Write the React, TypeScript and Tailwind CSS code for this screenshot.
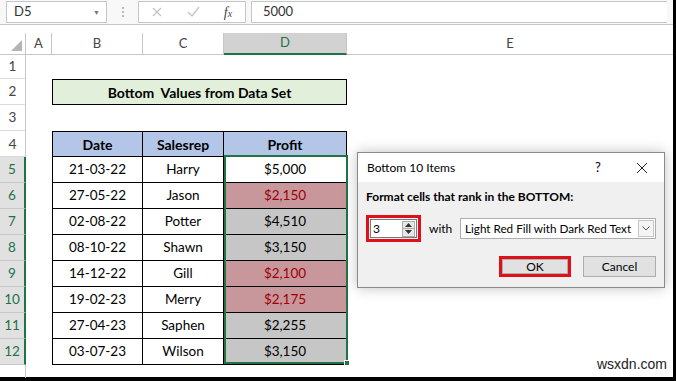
import React from "react";

const rows = [
  { d: "21-03-22", n: "Harry", p: "$5,000", t: "white" },
  { d: "27-05-22", n: "Jason", p: "$2,150", t: "red" },
  { d: "02-08-22", n: "Potter", p: "$4,510", t: "gray" },
  { d: "08-10-22", n: "Shawn", p: "$3,150", t: "gray" },
  { d: "14-12-22", n: "Gill", p: "$2,100", t: "red" },
  { d: "19-02-23", n: "Merry", p: "$2,175", t: "red" },
  { d: "27-04-23", n: "Saphen", p: "$2,255", t: "gray" },
  { d: "03-07-23", n: "Wilson", p: "$3,150", t: "gray" },
];

const cols = "grid grid-cols-[26px_26px_91px_81px_123px_1fr]";

function RowHead({ n, sel }: { n: number; sel?: boolean }) {
  return (
    <div
      className={
        sel
          ? "flex items-center justify-center bg-[#e1e1e1] text-[#217346] border-r-2 border-r-[#217346] border-b border-b-[#c8c8c8]"
          : "flex items-center justify-center bg-white text-[#444] border-r border-r-[#c6c6c6] border-b border-b-[#dadada]"
      }
    >
      {n}
    </div>
  );
}

export default function App() {
  return (
    <div className="w-[676px] h-[381px] bg-black overflow-hidden">
      <div className="relative w-[673px] h-[377px] bg-white font-['Lato',sans-serif] text-[13.5px] text-black">
        {/* Formula bar */}
        <div className="h-[25px] bg-[#f8f8f8] border-b border-[#c6c6c6] flex items-center px-[6px] text-[13px] text-[#333]">
          <div className="w-[101px] h-[22px] bg-white border border-[#c6c6c6] flex items-center justify-between pl-[7px] pr-[6px]">
            <span>D5</span>
            <span className="text-[7px] text-[#777]">▼</span>
          </div>
          <div className="w-[31px] flex flex-col items-center gap-[2px]">
            <span className="w-[2px] h-[2px] bg-[#bbb]" />
            <span className="w-[2px] h-[2px] bg-[#bbb]" />
            <span className="w-[2px] h-[2px] bg-[#bbb]" />
          </div>
          <div className="w-[108px] h-[22px] bg-white border border-[#c6c6c6] flex items-center">
            <svg width="36" height="20" viewBox="0 0 36 20">
              <path d="M14 6 L22 14 M22 6 L14 14" stroke="#c4c4c4" strokeWidth="1.3" />
            </svg>
            <svg width="36" height="20" viewBox="0 0 36 20">
              <path d="M13 10 L17 14 L24 5" stroke="#c4c4c4" strokeWidth="1.3" fill="none" />
            </svg>
            <span className="w-[34px] text-center italic font-['Liberation_Serif',serif] text-[14px] text-[#444]">
              f<span className="text-[10px]">x</span>
            </span>
          </div>
          <div className="ml-[5px] flex-1 h-[22px] bg-white border border-[#c6c6c6] border-r-0 flex items-center pl-[11px]">
            5000
          </div>
        </div>

        {/* Column headers */}
        <div className={`${cols} mt-[8px] h-[22px] text-[13px] text-[#444]`}>
          <div className="relative border-r border-b border-[#c6c6c6]">
            <svg className="absolute right-[3px] bottom-[3px]" width="11" height="11" viewBox="0 0 11 11">
              <path d="M11 0 L11 11 L0 11 Z" fill="#b4b4b4" />
            </svg>
          </div>
          <div className="flex items-center justify-center border-r border-b border-[#c6c6c6]">A</div>
          <div className="flex items-center justify-center border-r border-b border-[#c6c6c6]">B</div>
          <div className="flex items-center justify-center border-r border-b border-[#c6c6c6]">C</div>
          <div className="flex items-center justify-center bg-[#d2d2d2] border-r border-[#c6c6c6] border-b-2 border-b-[#217346] text-[#217346]">D</div>
          <div className="flex items-center justify-center border-b border-[#c6c6c6]">E</div>
        </div>

        {/* Row 1 */}
        <div className={`${cols} h-[24px]`}>
          <RowHead n={1} />
          <div />
          <div />
          <div />
          <div />
          <div />
        </div>

        {/* Row 2 */}
        <div className={`${cols} h-[26px]`}>
          <RowHead n={2} />
          <div />
          <div className="col-span-3 bg-[#e2efda] border border-black flex items-center justify-center font-bold text-[14px]">
            Bottom&nbsp; Values from Data Set
          </div>
          <div />
        </div>

        {/* Row 3 */}
        <div className={`${cols} h-[26px]`}>
          <RowHead n={3} />
          <div />
          <div />
          <div />
          <div />
          <div />
        </div>

        {/* Row 4 */}
        <div className={`${cols} h-[26px] text-[14px]`}>
          <RowHead n={4} />
          <div />
          <div className="bg-[#b4c6e7] border border-black flex items-center justify-center font-bold">Date</div>
          <div className="bg-[#b4c6e7] border-y border-r border-black flex items-center justify-center font-bold">Salesrep</div>
          <div className="bg-[#b4c6e7] border-y border-r border-black flex items-center justify-center font-bold">Profit</div>
          <div />
        </div>

        {rows.map((r, i) => (
          <div key={i} className={`${cols} h-[26px]`}>
            <RowHead n={i + 5} sel />
            <div />
            <div className="border-x border-b border-black flex items-center justify-center">{r.d}</div>
            <div className="border-r border-b border-black flex items-center justify-center">{r.n}</div>
            <div
              className={
                r.t === "red"
                  ? "border-r border-b border-black flex items-center justify-center bg-[#c8979c] text-[#9c0006]"
                  : r.t === "gray"
                  ? "border-r border-b border-black flex items-center justify-center bg-[#c6c6c6]"
                  : "border-r border-b border-black flex items-center justify-center bg-white"
              }
            >
              {r.p}
            </div>
            <div />
          </div>
        ))}

        {/* rest of row headers column */}
        <div className="w-[26px] h-[13px] border-r border-[#c6c6c6]" />

        {/* Selection outline D5:D12 */}
        <div className="absolute left-[224px] top-[155px] w-[124px] h-[209px] border-2 border-[#217346]" />
        <div className="absolute left-[344px] top-[360px] w-[6px] h-[6px] bg-[#217346] border border-white" />

        {/* Dialog */}
        <div className="absolute left-[357px] top-[152px] w-[308px] h-[136px] bg-[#f0f0f0] border border-[#8a8a8a] shadow-[0_0_12px_rgba(0,0,0,0.25)] font-['Lato',sans-serif] text-[12px] text-black">
          <div className="h-[29px] bg-white flex items-center pl-[9px] pr-[16px]">
            <span className="flex-1">Bottom 10 Items</span>
            <span className="w-[12px] text-center text-[13px]">?</span>
            <svg className="ml-[32px]" width="12" height="12" viewBox="0 0 12 12">
              <path d="M1 1 L11 11 M11 1 L1 11" stroke="#222" strokeWidth="1" />
            </svg>
          </div>
          <div className="px-[8px] pt-[6px]">
            <div className="font-bold">Format cells that rank in the BOTTOM:</div>
            <div className="mt-[9px] flex items-center">
              <div className="w-[59px] h-[27px] border-[3px] border-[#e0101a] flex items-center p-[1px]">
                <div className="flex-1 h-full bg-white border border-[#7a7a7a] flex items-center pl-[2px] pr-[1px]">
                  <span className="flex-1">3</span>
                  <div className="w-[13px] h-[16px] flex flex-col border border-[#adadad] bg-[#e8e8e8]">
                    <div className="flex-1 flex items-center justify-center border-b border-[#adadad]">
                      <svg width="7" height="4" viewBox="0 0 7 4"><path d="M0 4 L3.5 0 L7 4 Z" fill="#333" /></svg>
                    </div>
                    <div className="flex-1 flex items-center justify-center">
                      <svg width="7" height="4" viewBox="0 0 7 4"><path d="M0 0 L3.5 4 L7 0 Z" fill="#333" /></svg>
                    </div>
                  </div>
                </div>
              </div>
              <span className="ml-[8px] w-[35px] shrink-0">with</span>
              <div className="ml-[-4px] w-[196px] shrink-0 h-[21px] bg-white border border-[#adadad] flex items-center pl-[4px] pr-[1px]">
                <span className="flex-1 whitespace-nowrap overflow-hidden text-[11.7px]">Light Red Fill with Dark Red Text</span>
                <div className="w-[16px] h-[17px] border border-[#c6c6c6] bg-[#f4f4f4] flex items-center justify-center">
                  <svg width="8" height="5" viewBox="0 0 8 5"><path d="M0.5 0.5 L4 4 L7.5 0.5" stroke="#555" fill="none" strokeWidth="1" /></svg>
                </div>
              </div>
            </div>
            <div className="mt-[14px] flex justify-end gap-[12px]">
              <div className="w-[72px] h-[21px] border-[3px] border-[#e0101a] flex items-stretch">
                <div className="flex-1 bg-[#e1e1e1] border border-[#adadad] flex items-center justify-center">OK</div>
              </div>
              <div className="w-[73px] h-[21px] bg-[#e1e1e1] border border-[#adadad] flex items-center justify-center">Cancel</div>
            </div>
          </div>
        </div>

        {/* Watermark */}
        <div className="absolute right-[6px] bottom-[2px] font-['Liberation_Sans',sans-serif] text-[14px] text-[#222]">wsxdn.com</div>
      </div>
    </div>
  );
}
